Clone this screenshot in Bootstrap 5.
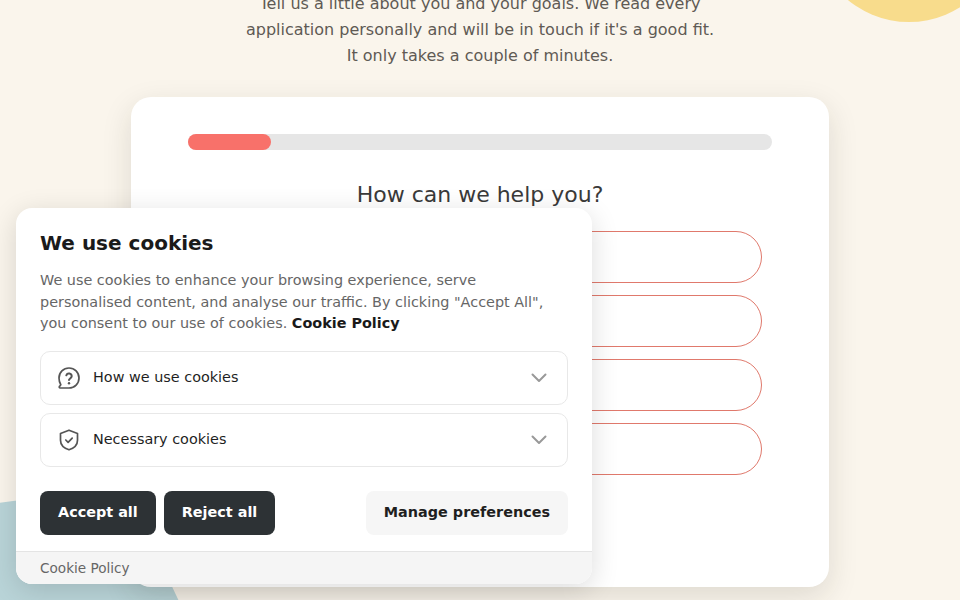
<!DOCTYPE html>
<html lang="en">
<head>
<meta charset="utf-8">
<title>Apply</title>
<link href="https://cdn.jsdelivr.net/npm/bootstrap@5.3.0/dist/css/bootstrap.min.css" rel="stylesheet">
<style>
html,body{height:100%;}
body{font-family:"DejaVu Sans",sans-serif;background:#faf5ec;overflow:hidden;position:relative;}
.blob-sun{position:absolute;left:813px;top:-170px;width:192px;height:192px;border-radius:50%;background:#f8dc8c;}
.blob-sea{position:absolute;left:-130px;top:500px;width:320px;height:320px;border-radius:50%;background:#b9d4d8;}
.stage{position:relative;width:698px;margin:0 auto;}
.intro{height:77px;margin:-9px -40px 0;padding-top:.4px;color:#5f5a54;font-size:16px;line-height:25.6px;}
.form-panel{margin-top:29px;height:490px;border-radius:20px;padding:37px 57px 0;box-shadow:0 10px 30px rgba(40,35,20,.13);}
.meter{height:16px;background:#e6e6e6;border-radius:8px;}
.meter-fill{height:16px;background:#f8716a;border-radius:8px;}
.form-q{font-size:22px;font-weight:400;color:#3a3a3a;margin:31px 0 22px;line-height:28px;}
.pill-list{margin:0 10px;gap:12px;}
.pill-opt{height:52px;border:1px solid #e0796c;border-radius:26px;background:#fff;}
.cookie-box{position:absolute;left:16px;top:208px;width:576px;height:376px;background:#fff;border-radius:16px;box-shadow:0 6px 28px rgba(0,0,0,.14);overflow:hidden;}
.cookie-main{padding:24px 24px 0;}
.cookie-title{font-size:20px;font-weight:700;color:#1a1a1a;margin:0 0 16px;line-height:22px;}
.cookie-text{font-size:14.4px;line-height:21.6px;color:#666;margin:0 0 16px;}
.cookie-text a{color:#1a1a1a;font-weight:700;text-decoration:none;}
.acc-row{height:54px;border:1px solid #e8e8e8;border-radius:10px;padding:0 18px 0 16px;margin-bottom:8px;color:#1f1f1f;font-size:14.4px;}
.acc-row svg.lead-ico{width:24px;height:24px;margin-right:12px;flex:none;}
.acc-row svg.chev{width:20px;height:20px;flex:none;}
.cookie-actions{margin-top:24px;}
.btn-ink,.btn-ink:hover{background:#2d3235;color:#fff;border:0;border-radius:8px;height:44px;padding:0 18px;font-size:14.4px;font-weight:700;}
.btn-soft,.btn-soft:hover{background:#f6f6f6;color:#1f1f1f;border:0;border-radius:8px;height:44px;padding:0 18px;font-size:14.4px;font-weight:700;}
.cookie-foot{position:absolute;left:0;right:0;bottom:0;height:33px;background:#f5f5f5;border-top:1px solid #e4e4e4;padding:0 24px;font-size:13.6px;color:#666;}
</style>
</head>
<body>
<div class="blob-sun"></div>
<div class="blob-sea"></div>
<main class="stage">
  <div class="intro text-center">Tell us a little about you and your goals. We read every<br>application personally and will be in touch if it's a good fit.<br>It only takes a couple of minutes.</div>
  <section class="form-panel bg-white">
    <div class="meter"><div class="meter-fill" style="width:14.2%"></div></div>
    <h2 class="form-q text-center">How can we help you?</h2>
    <div class="pill-list d-flex flex-column">
      <div class="pill-opt"></div>
      <div class="pill-opt"></div>
      <div class="pill-opt"></div>
      <div class="pill-opt"></div>
    </div>
  </section>
</main>
<aside class="cookie-box">
  <div class="cookie-main">
    <h3 class="cookie-title">We use cookies</h3>
    <p class="cookie-text">We use cookies to enhance your browsing experience, serve personalised content, and analyse our traffic. By clicking "Accept All", you consent to our use of cookies. <a href="#">Cookie Policy</a></p>
    <div class="acc-row d-flex align-items-center">
      <svg class="lead-ico" viewBox="0 0 24 24" fill="none" stroke="#555" stroke-width="1.7" stroke-linecap="round" stroke-linejoin="round"><path d="M12 2c5.600 0 10 4.400 10 10s-4.400 10-10 10H3.200c-.9 0-1.300-1-.7-1.600l1.300-1.700C2.700 17 2 14.600 2 12 2 6.400 6.400 2 12 2z"/><path d="M9.300 9.300a2.800 2.800 0 0 1 5.400 1c0 1.800-2.700 2.400-2.700 3.700" stroke-width="2"/><path d="M12 17.200h.01" stroke-width="2.400"/></svg>
      <span class="flex-grow-1">How we use cookies</span>
      <svg class="chev" viewBox="0 0 20 20" fill="none" stroke="#999" stroke-width="2" stroke-linecap="round" stroke-linejoin="round"><path d="M3.500 6.500 10 13l6.500-6.500"/></svg>
    </div>
    <div class="acc-row d-flex align-items-center">
      <svg class="lead-ico" viewBox="0 0 24 24" fill="none" stroke="#555" stroke-width="1.7" stroke-linecap="round" stroke-linejoin="round"><path d="M12 2.200 20.500 5.500v6.800c0 4.400-3.400 7.900-8.500 9.500-5.100-1.600-8.500-5.100-8.500-9.500V5.500z"/><path d="m8.800 12 2.300 2.300 4.100-4.200"/></svg>
      <span class="flex-grow-1">Necessary cookies</span>
      <svg class="chev" viewBox="0 0 20 20" fill="none" stroke="#999" stroke-width="2" stroke-linecap="round" stroke-linejoin="round"><path d="M3.500 6.500 10 13l6.500-6.500"/></svg>
    </div>
    <div class="cookie-actions d-flex gap-2">
      <button class="btn btn-ink" type="button">Accept all</button>
      <button class="btn btn-ink" type="button">Reject all</button>
      <button class="btn btn-soft ms-auto" type="button">Manage preferences</button>
    </div>
  </div>
  <div class="cookie-foot d-flex align-items-center">Cookie Policy</div>
</aside>
<script src="https://cdn.jsdelivr.net/npm/bootstrap@5.3.0/dist/js/bootstrap.bundle.min.js"></script>
</body>
</html>
